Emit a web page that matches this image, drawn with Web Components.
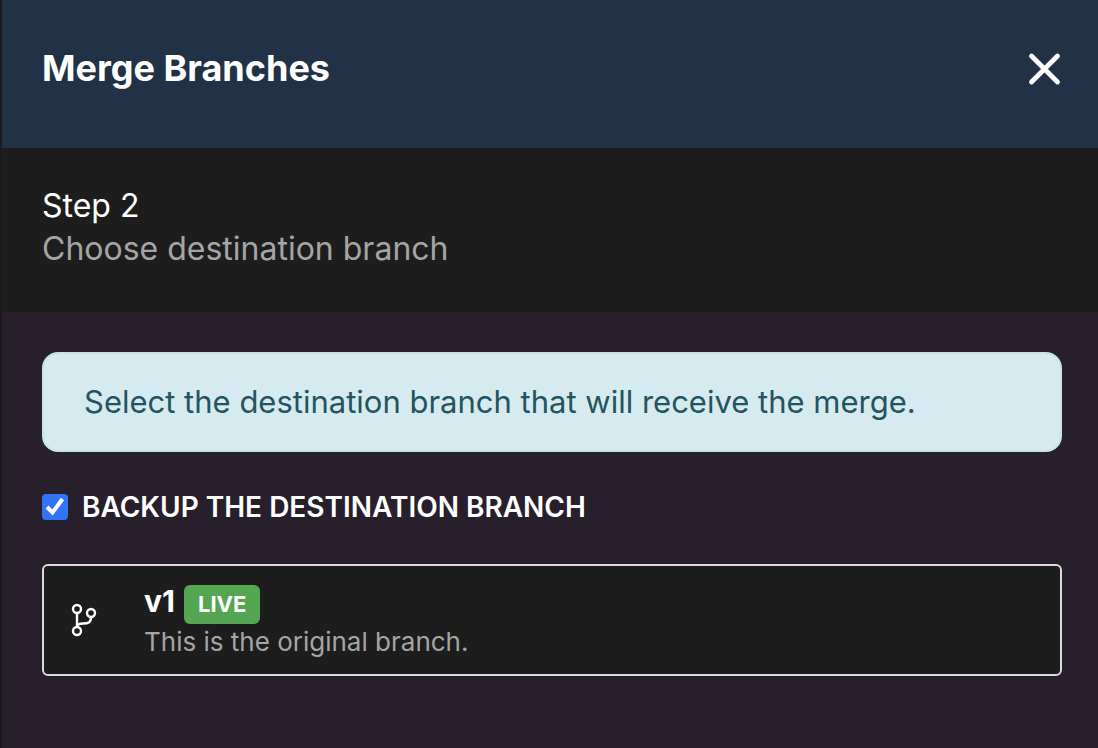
<!DOCTYPE html>
<html lang="en">
<head>
<meta charset="utf-8">
<meta name="viewport" content="width=device-width, initial-scale=1">
<title>Merge Branches</title>
<style>
  html, body { height: 100%; }
  body { margin: 0; background: #1c1c1c; color: #fff; font-family: Inter, "Liberation Sans", sans-serif; }
</style>
</head>
<body>
<merge-panel>
  <panel-header slot="header">Merge Branches</panel-header>
  <step-intro slot="step"><span slot="title">Step 2</span>Choose destination branch</step-intro>
  <info-alert>Select the destination branch that will receive the merge.</info-alert>
  <check-option>Backup the destination branch</check-option>
  <branch-card><span slot="name">v1</span><status-badge slot="name">LIVE</status-badge>This is the original branch.</branch-card>
</merge-panel>

<script>
  const define = (name, markup) => {
    const template = document.createElement('template');
    template.innerHTML = '<style>*, :host { box-sizing: border-box; }</style>' + markup;
    customElements.define(name, class extends HTMLElement {
      constructor() {
        super();
        this.attachShadow({ mode: 'open' }).append(template.content.cloneNode(true));
      }
    });
  };

  define('merge-panel', `
    <style>
      :host { display: flex; flex-direction: column; min-height: 100%; border-left: 2px solid #1a1a1a; }
      main { flex: 1; display: flex; flex-direction: column; padding: 40px 36px 40px 40px; background: #281f2c; }
    </style>
    <slot name="header"></slot>
    <slot name="step"></slot>
    <main><slot></slot></main>`);

  define('panel-header', `
    <style>
      :host { display: block; background: #213247; }
      header { display: flex; justify-content: space-between; align-items: center; padding: 40px 36px 52px 40px; }
      h1 { margin: 0; font-size: 36px; line-height: 56px; font-weight: 700; }
      button { display: flex; padding: 0; border: 0; background: none; color: inherit; cursor: pointer; }
      svg { width: 36px; height: 36px; }
    </style>
    <header>
      <h1><slot></slot></h1>
      <button type="button" aria-label="Close">
        <svg viewBox="0 0 36 36" fill="none" stroke="currentColor" stroke-width="4.800" stroke-linecap="round"><path d="M5.500 6 31.500 32M31.500 6 5.500 32"/></svg>
      </button>
    </header>`);

  define('step-intro', `
    <style>
      :host { display: block; padding: 36px 36px 42px 40px; background: #1d1d1d; }
      h2, p { margin: 0; font-size: 32px; line-height: 43px; font-weight: 400; }
      p { color: #a5a5a5; }
    </style>
    <h2><slot name="title"></slot></h2>
    <p><slot></slot></p>`);

  define('info-alert', `
    <style>
      :host { display: block; padding: 24px 40px; border: 2px solid #c5e3e9; border-radius: 16px;
        background: #d6ebf0; color: #24545f; font-size: 31px; line-height: 48px; }
    </style>
    <div role="status"><slot></slot></div>`);

  define('check-option', `
    <style>
      :host { display: block; margin: 32px 0 34px; }
      label { display: flex; align-items: center; gap: 14px; font-size: 28px; line-height: 46px; font-weight: 600; text-transform: uppercase; }
      .box { display: grid; width: 26px; height: 26px; }
      input, svg { grid-area: 1 / 1; width: 26px; height: 26px; margin: 0; }
      input { appearance: none; border: 2px solid #3274f6; border-radius: 4px; }
      input:checked { background: #3274f6; }
      svg { pointer-events: none; visibility: hidden; }
      input:checked + svg { visibility: visible; }
    </style>
    <label>
      <span class="box">
        <input type="checkbox" checked>
        <svg viewBox="0 0 26 26" fill="none" stroke="#fff" stroke-width="4"><path d="M5 13 10.500 18.500 20.500 5"/></svg>
      </span>
      <slot></slot>
    </label>`);

  define('branch-card', `
    <style>
      :host { display: flex; align-items: center; gap: 44px; padding: 16px 24px 14px; border: 2px solid #dadada; border-radius: 6px; background: #1d1d1d; }
      svg { flex: none; width: 32px; height: 36px; }
      h3 { display: flex; align-items: baseline; gap: 9px; height: 42px; margin: 0; font-size: 30px; line-height: 38px; font-weight: 700; }
      p { margin: 0; color: #a5a5a5; font-size: 26px; line-height: 36px; }
    </style>
    <svg viewBox="0 0 32 36" fill="none" stroke="#fff" stroke-width="2.400" aria-hidden="true">
      <circle cx="9" cy="6" r="4"/><circle cx="23" cy="10" r="4"/><circle cx="9" cy="28" r="4"/>
      <path d="M9 10V24M23 14C23 20 20 20.500 15 20.500 11 20.500 9 21.500 9 24"/>
    </svg>
    <div>
      <h3><slot name="name"></slot></h3>
      <p><slot></slot></p>
    </div>`);

  define('status-badge', `
    <style>
      :host { display: block; padding: 0 14px; border-radius: 6px; background: #54a653; color: #fff; font-size: 22px; line-height: 39px; font-weight: 700; }
    </style>
    <slot></slot>`);
</script>
</body>
</html>
